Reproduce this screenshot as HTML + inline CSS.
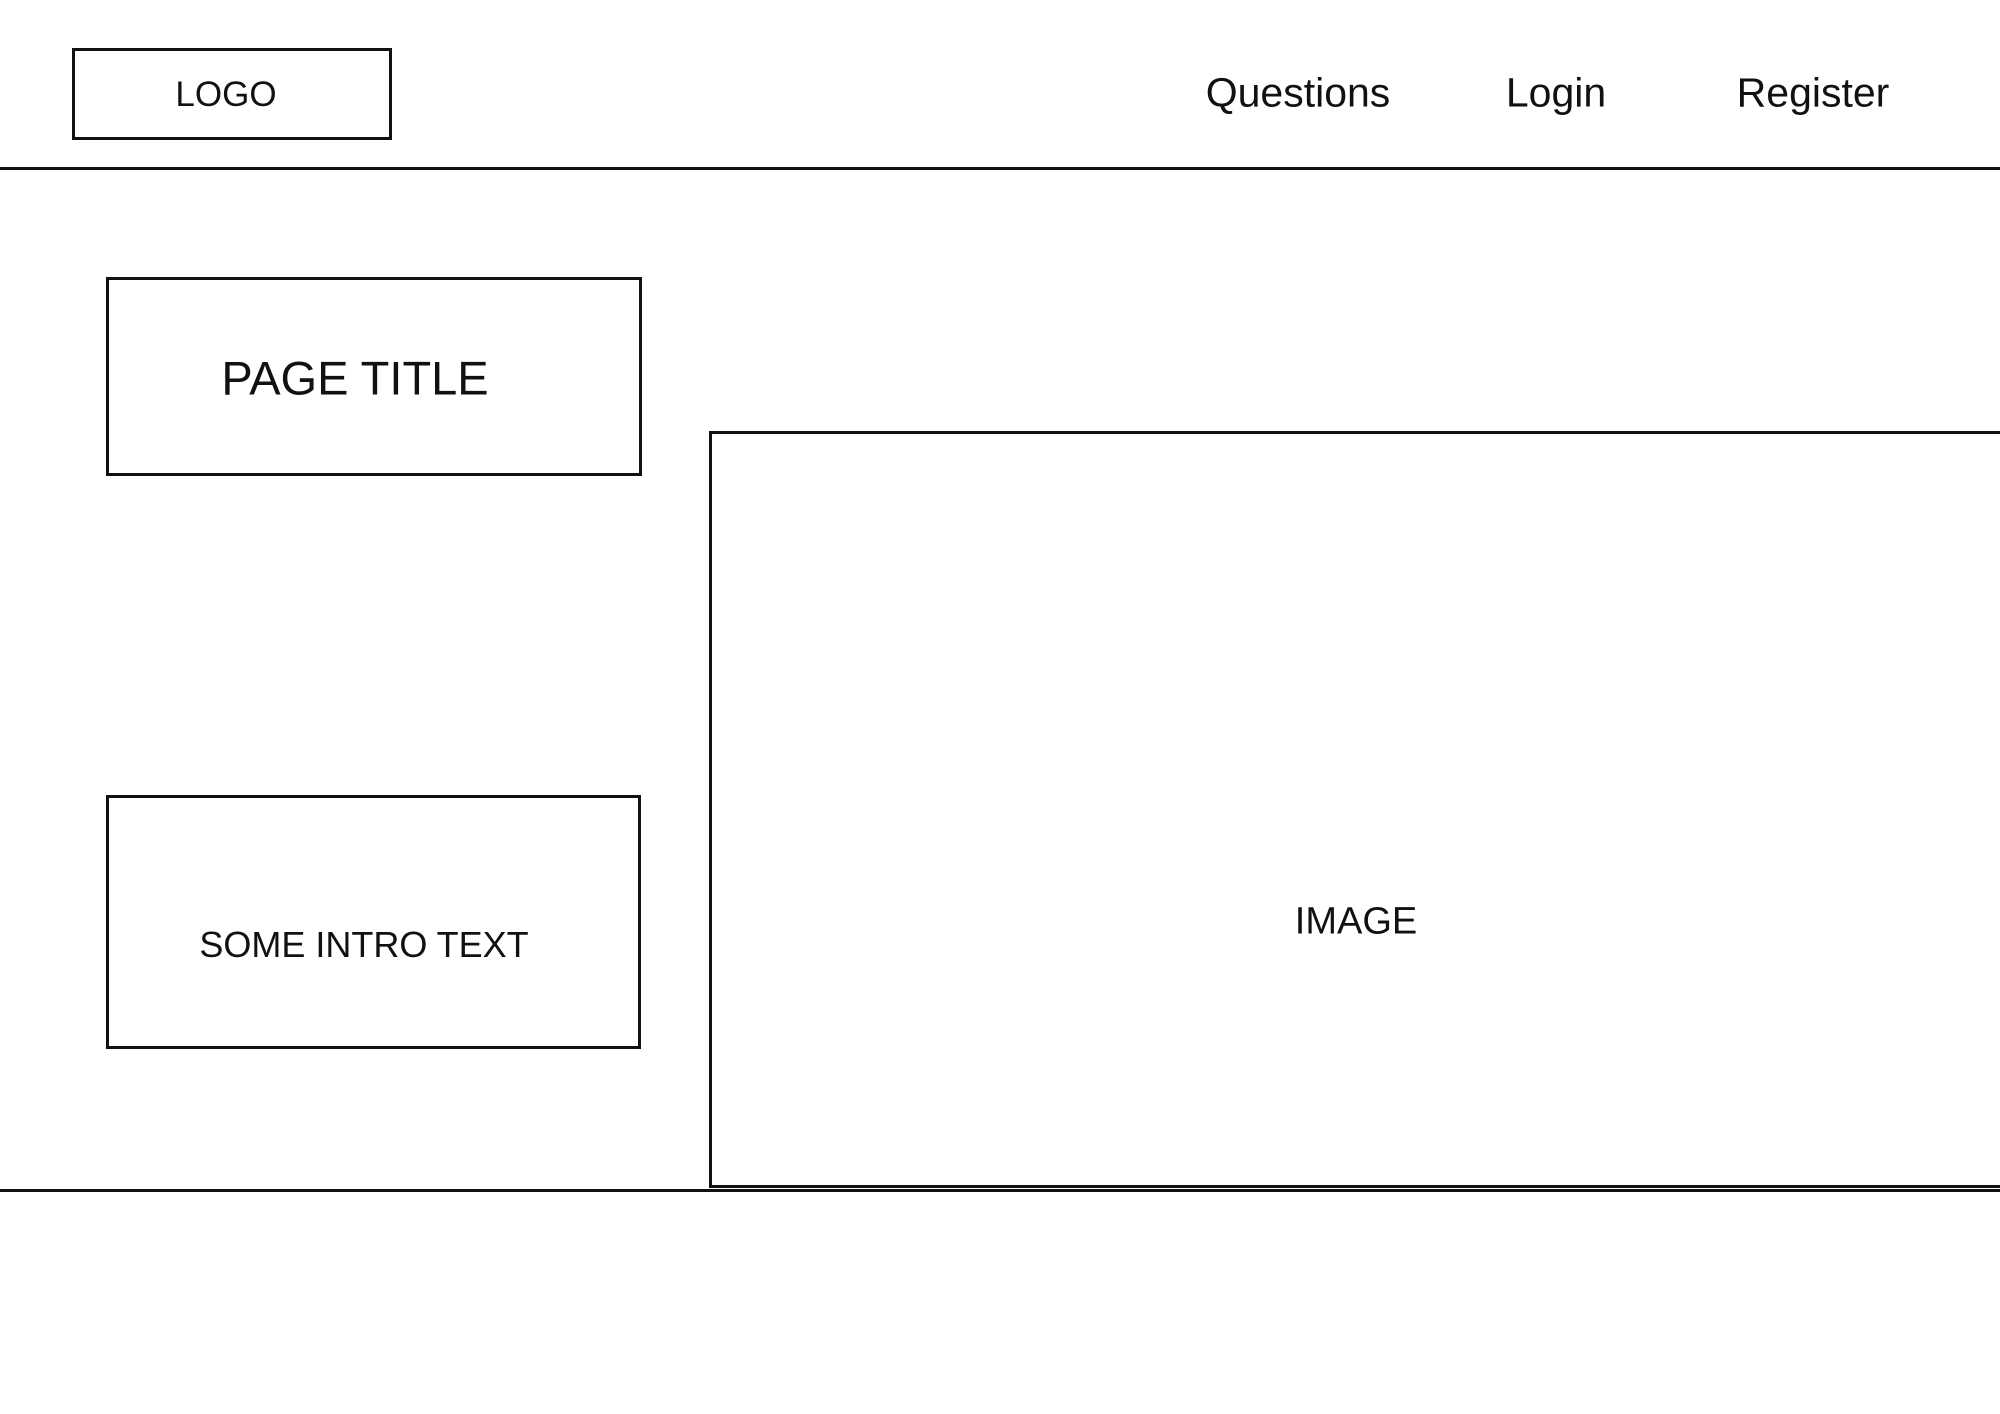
<!DOCTYPE html>
<html><head><style>
body{margin:0;width:2000px;height:1414px;background:#fff;position:relative;overflow:hidden;font-family:"Liberation Sans",sans-serif;color:#111}
.b{position:absolute;border:3px solid #111;box-sizing:border-box}
.t{position:absolute;transform:translate(-50%,-50%);white-space:nowrap}
.l{position:absolute;left:0;height:3px;background:#111}
</style></head><body>
<div class="b" style="left:72px;top:48px;width:320px;height:92px"></div>
<div class="t" style="left:226px;top:95px;font-size:35px">LOGO</div>
<div class="t" style="left:1298px;top:93px;font-size:41px">Questions</div>
<div class="t" style="left:1556px;top:93px;font-size:41px">Login</div>
<div class="t" style="left:1813px;top:93px;font-size:41px">Register</div>
<div class="l" style="top:167px;width:2000px"></div>
<div class="b" style="left:106px;top:277px;width:536px;height:199px"></div>
<div class="t" style="left:355px;top:378px;font-size:47px">PAGE TITLE</div>
<div class="b" style="left:106px;top:795px;width:535px;height:254px"></div>
<div class="t" style="left:364px;top:945px;font-size:36px">SOME INTRO TEXT</div>
<div class="b" style="left:709px;top:431px;width:1295px;height:757px"></div>
<div class="t" style="left:1356px;top:922px;font-size:38px">IMAGE</div>
<div class="l" style="top:1189px;width:2000px"></div>
</body></html>
